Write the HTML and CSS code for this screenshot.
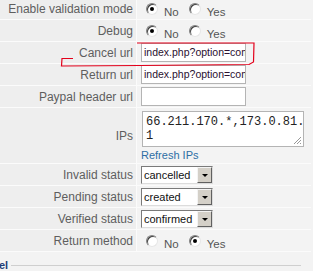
FILE: index.html
```html
<!DOCTYPE html>
<html lang="en">
  <head>
    <meta charset="UTF-8">
    <title>Paypal settings</title>
    <link rel="stylesheet" href="styles.css">
  </head>
  <body>
    <div class="page">
      <table class="admintable">
        <tr>
          <td class="key">Enable validation mode</td>
          <td class="val">
            <div class="radios">
              <span class="radio checked"></span><span class="rlabel">No</span>
              <span class="radio"></span><span class="rlabel">Yes</span>
            </div>
          </td>
        </tr>
        <tr>
          <td class="key">Debug</td>
          <td class="val">
            <div class="radios">
              <span class="radio checked"></span><span class="rlabel">No</span>
              <span class="radio"></span><span class="rlabel">Yes</span>
            </div>
          </td>
        </tr>
        <tr>
          <td class="key">Cancel url</td>
          <td class="val"><div class="input">index.php?option=com_paypal&amp;task=cancel</div></td>
        </tr>
        <tr>
          <td class="key">Return url</td>
          <td class="val"><div class="input">index.php?option=com_paypal&amp;task=return</div></td>
        </tr>
        <tr>
          <td class="key">Paypal header url</td>
          <td class="val"><div class="input"></div></td>
        </tr>
        <tr class="tall">
          <td class="key">IPs</td>
          <td class="val">
            <div class="textarea">66.211.170.*,173.0.81.<br>1
              <svg class="grip" width="9" height="9" viewBox="0 0 9 9">
                <path d="M8 1L1 8M8 4L4 8M8 7L7 8" stroke="#999" stroke-width="1"/>
              </svg>
            </div>
            <a class="refresh" href="#">Refresh IPs</a>
          </td>
        </tr>
        <tr>
          <td class="key">Invalid status</td>
          <td class="val"><div class="select"><span class="stext">cancelled</span><span class="sbtn"><i class="arrow"></i></span></div></td>
        </tr>
        <tr>
          <td class="key">Pending status</td>
          <td class="val"><div class="select"><span class="stext">created</span><span class="sbtn"><i class="arrow"></i></span></div></td>
        </tr>
        <tr>
          <td class="key">Verified status</td>
          <td class="val"><div class="select"><span class="stext">confirmed</span><span class="sbtn"><i class="arrow"></i></span></div></td>
        </tr>
        <tr>
          <td class="key">Return method</td>
          <td class="val">
            <div class="radios">
              <span class="radio"></span><span class="rlabel">No</span>
              <span class="radio checked"></span><span class="rlabel">Yes</span>
            </div>
          </td>
        </tr>
      </table>

      <div class="legend-row">
        <span class="legend">el</span>
        <div class="legend-line"></div>
      </div>
    </div>

    <!-- hand-drawn note over the cancel url field -->
    <svg class="scribble" width="313" height="271" viewBox="0 0 313 271">
      <polyline points="73,58.5 62,58.5 61.5,66 140,65.5 249,64.5 253.5,62 254,43 137,43"
        fill="none" stroke="#e3001b" stroke-width="1.2"/>
    </svg>
  </body>
</html>
```

FILE: styles.css
```css
body {
  margin: 0;
  background: #f3f3f3;
  font-family: 'Liberation Sans', Arial, sans-serif;
  font-size: 11px;
  color: #555;
  width: 313px;
  height: 271px;
  overflow: hidden;
}
.page {
  margin-top: -2px;
}
.admintable {
  border-collapse: separate;
  border-spacing: 0;
}
.admintable td {
  height: 21px;
  padding: 0;
  border-bottom: 1px solid #fbfbfb;
  vertical-align: middle;
}
.admintable tr.tall td {
  height: 55px;
}
.key {
  width: 133px;
  padding-right: 3px !important;
  background: #eeeeee;
  border-right: 1px solid #fbfbfb;
  text-align: right;
  font-size: 12px;
  color: #5e5e5e;
  white-space: nowrap;
}
.val {
  padding-left: 4px !important;
  width: 170px;
}
.radios {
  display: flex;
  align-items: center;
  height: 21px;
}
.radio {
  box-sizing: border-box;
  width: 12px;
  height: 12px;
  border-radius: 50%;
  background: #fff;
  border: 1px solid;
  border-color: #808080 #e6e6e6 #e6e6e6 #808080;
  box-shadow: inset 1px 1px 0 #404040;
  display: flex;
  align-items: center;
  justify-content: center;
  margin-left: 5px;
}
.radio + .rlabel {
  margin-left: 6px;
}
.rlabel + .radio {
  margin-left: 10px;
}
.radio.checked::after {
  content: '';
  width: 4px;
  height: 4px;
  border-radius: 50%;
  background: #000;
}
.rlabel {
  margin-top: 7px;
  color: #555;
  font-size: 11.5px;
}
.input {
  box-sizing: border-box;
  width: 105px;
  height: 19px;
  background: #fff;
  border: 1px solid #b4b4b4;
  color: #2a1030;
  font-size: 10.5px;
  padding: 2px 2px 0;
  overflow: hidden;
  white-space: nowrap;
}
.textarea {
  position: relative;
  box-sizing: border-box;
  width: 162px;
  height: 36px;
  margin: 1px 0 2px 1px;
  background: #fff;
  border: 1px solid #b4b4b4;
  padding: 3px 0 0 3px;
  font-family: 'Liberation Mono', 'Courier New', monospace;
  font-size: 12px;
  line-height: 14px;
  color: #222;
  white-space: nowrap;
}
.grip {
  position: absolute;
  right: 1px;
  bottom: 1px;
}
.refresh {
  display: block;
  color: #2d6ea4;
  text-decoration: none;
  line-height: 13px;
}
.select {
  box-sizing: border-box;
  display: flex;
  width: 72px;
  height: 18px;
  background: #fff;
  border: 1px solid #7a7a7a;
  border-color: #7a7a7a #dcdcdc #dcdcdc #7a7a7a;
  color: #111;
}
.stext {
  flex: 1;
  padding: 2px 0 0 2px;
  white-space: nowrap;
  overflow: hidden;
}
.sbtn {
  box-sizing: border-box;
  width: 15px;
  height: 16px;
  background: #d4d0c8;
  border: 1px solid;
  border-color: #f4f4f4 #606060 #606060 #f4f4f4;
  display: flex;
  align-items: center;
  justify-content: center;
}
.arrow {
  width: 0;
  height: 0;
  border-left: 3px solid transparent;
  border-right: 3px solid transparent;
  border-top: 3px solid #000;
  margin-top: 1px;
}
.legend-row {
  display: flex;
  align-items: center;
  margin-top: 7px;
  margin-right: 12px;
}
.legend {
  color: #1f3f78;
  font-weight: bold;
  margin-left: -1px;
}
.legend-line {
  flex: 1;
  border-top: 1px solid #cfcfcf;
  margin-left: 3px;
}
.scribble {
  position: absolute;
  left: 0;
  top: 0;
  pointer-events: none;
}
```
